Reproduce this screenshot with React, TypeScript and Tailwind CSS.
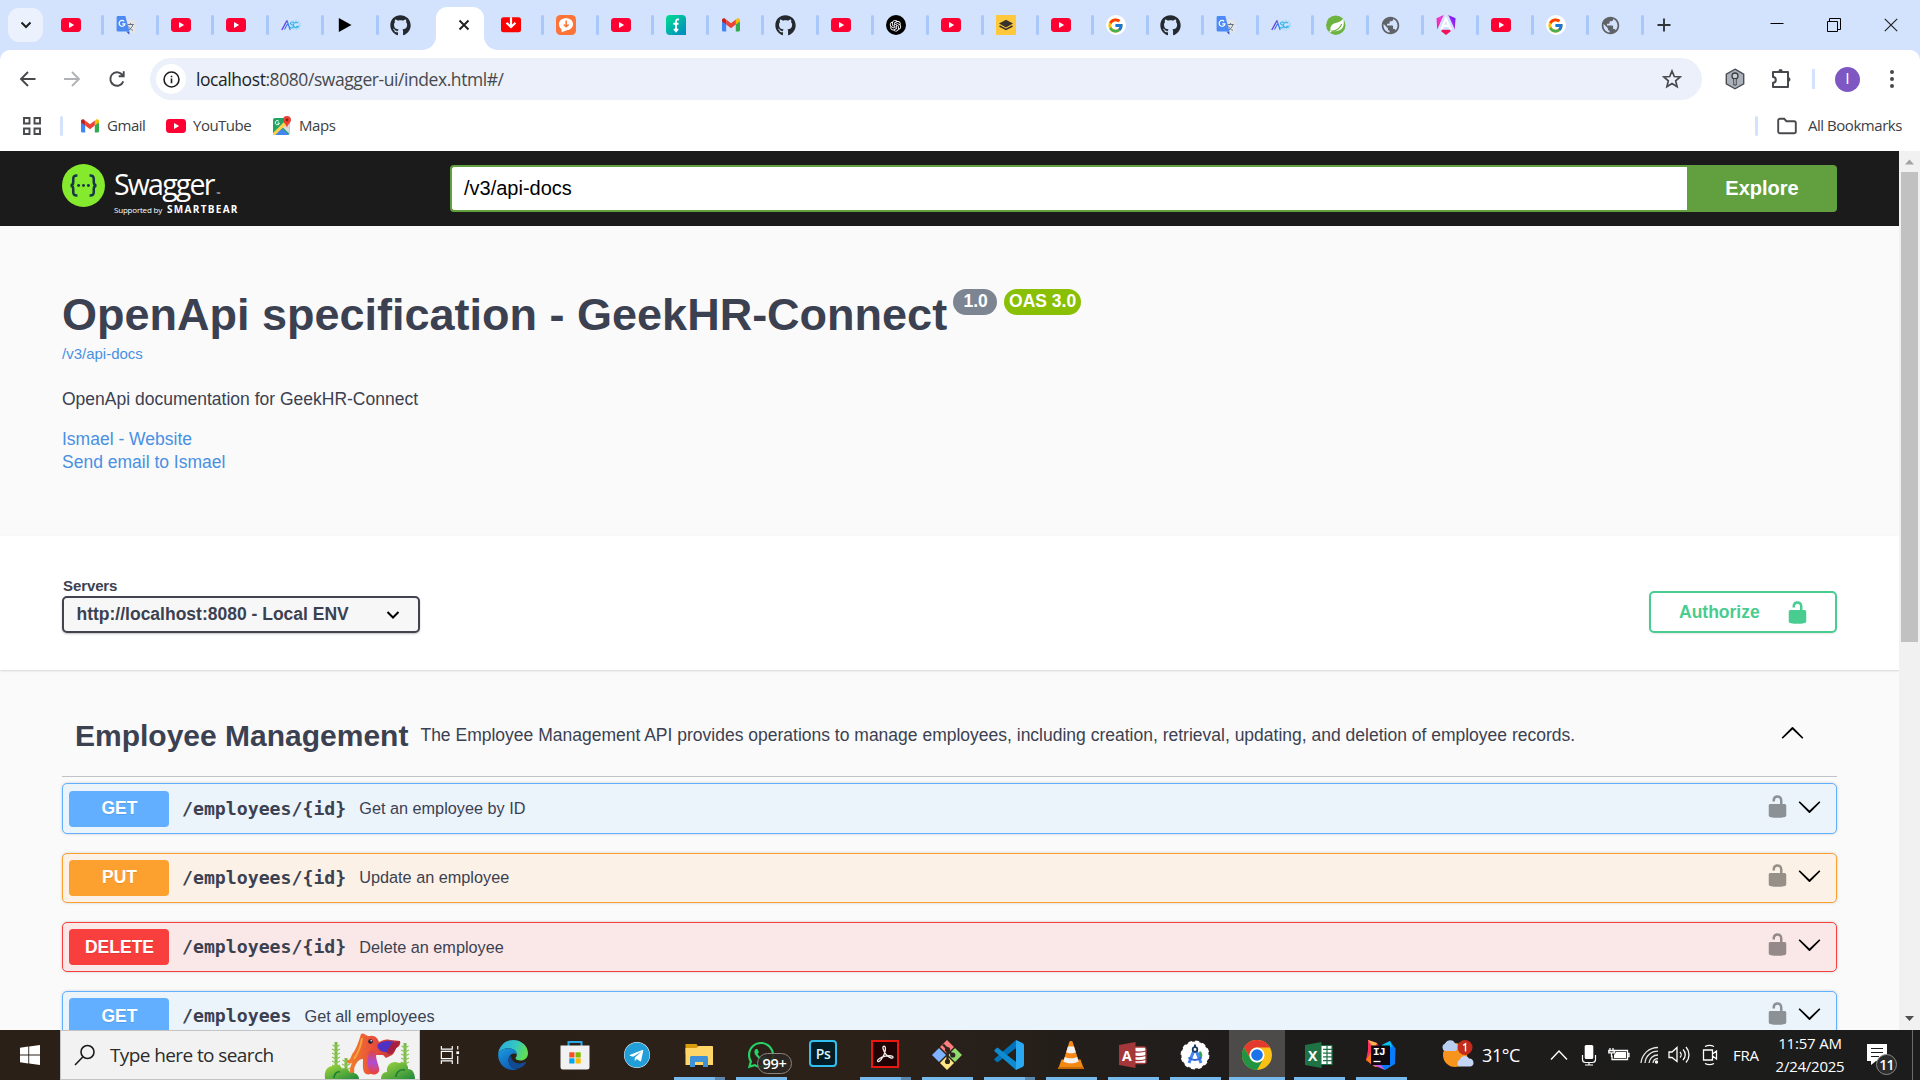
import React, { ReactNode } from 'react';
import { FcGoogle } from 'react-icons/fc';
import { FaGithub, FaTelegram, FaWhatsapp } from 'react-icons/fa';
import { AiOutlineOpenAI } from 'react-icons/ai';
import { MdPublic } from 'react-icons/md';

/* ---------- favicons ---------- */

const YouTube = () => (
  <svg viewBox="0 0 20 20" className="h-5 w-5">
    <rect x="0" y="3" width="20" height="14" rx="3.4" fill="#ff0033" />
    <path d="M8 7v6l5.2-3z" fill="#fff" />
  </svg>
);

const Translate = () => (
  <svg viewBox="0 0 20 20" className="h-5 w-5">
    <path d="M8 5h10a1.4 1.4 0 0 1 1.4 1.4v10.2A1.4 1.4 0 0 1 18 18h-6z" fill="#e3e5e8" />
    <path d="M11.5 9.5h6.3M14.6 8v1.5M16.8 9.7c-.6 2.6-2 4.3-4.3 5.3M12.6 11.5c.9 1.8 2.2 3 4.3 3.9" stroke="#6b7785" strokeWidth="1" fill="none" />
    <path d="M10.3 16.5 13.3 19.8l.1-3.3z" fill="#3a4ec4" />
    <path d="M2 1h7.3l4.2 15.5H2A1.4 1.4 0 0 1 .6 15V2.4A1.4 1.4 0 0 1 2 1z" fill="#4c8bf5" />
    <path d="M8.1 6.3A2.9 2.9 0 1 0 8.9 8.9H6.3" stroke="#fff" strokeWidth="1.2" fill="none" />
  </svg>
);

const Asg = () => (
  <svg viewBox="0 0 20 20" className="h-5 w-5">
    <circle cx="15" cy="10" r="4" fill="none" stroke="#a9d9f7" strokeWidth="2.4" strokeDasharray="1.5 1" />
    <path d="M.8 15 6 5.5" stroke="#6d3fe0" strokeWidth="1.4" fill="none" />
    <path d="m6 5.5 3.2 9.5M3.5 14.5 6.5 9" stroke="#3a7bf0" strokeWidth="1.2" fill="none" />
    <path d="M12.8 7.6c-1.2-1-3.4-.8-3.4.8 0 1.8 3.2 1 3.2 3 0 1.7-2.600 2-3.700.8M17 8.200a2.600 2.600 0 1 0 .3 3.200h-2" stroke="#35b6e8" strokeWidth="1.1" fill="none" />
  </svg>
);

const PlayMark = () => (
  <svg viewBox="0 0 20 20" className="h-5 w-5">
    <path d="M2.8 3v14L15.5 10z" fill="#000" />
  </svg>
);

const GitHub = () => <FaGithub className="h-[21px] w-[21px] text-[#24292f]" />;

const Downloader = () => (
  <svg viewBox="0 0 20 20" className="h-5 w-5">
    <rect y="2.3" width="20" height="15" rx="2.5" fill="#fe0000" />
    <path d="M10 2.3v9.5M5.5 7.8 10 12l4.5-4.2" stroke="#fff" strokeWidth="2.2" fill="none" />
  </svg>
);

const Bubble = () => (
  <svg viewBox="0 0 20 20" className="h-5 w-5">
    <rect width="20" height="20" rx="4.5" fill="#fe7338" />
    <path d="M10 3.2c4.2 0 7 2.3 7 5.8s-2.8 6-6 6.2L5.5 17.2v-3C3.8 13.2 3 11.3 3 9c0-3.5 2.8-5.8 7-5.8z" fill="#fff" />
    <path d="M10.2 5.5v6M7.8 9.5l2.4 2.2 2.4-2.2" stroke="#fe7338" strokeWidth="1.5" fill="none" />
  </svg>
);

const Fiverr = () => (
  <svg viewBox="0 0 20 20" className="h-5 w-5">
    <defs>
      <linearGradient id="fg" x1="0" y1="0" x2="1" y2="1">
        <stop offset="0" stopColor="#00e08e" />
        <stop offset="1" stopColor="#0086c3" />
      </linearGradient>
    </defs>
    <path d="M4 0h12a4 4 0 0 1 4 4v16H4a4 4 0 0 1-4-4V4a4 4 0 0 1 4-4z" fill="url(#fg)" />
    <path d="M13 4.5c-2-.5-3 .5-3 2.5v9M7.3 8.8h5.2M8 14l2 2.3 2-2.3" stroke="#fff" strokeWidth="1.9" fill="none" />
  </svg>
);

const Gmail = () => (
  <svg viewBox="0 0 20 20" className="h-5 w-5">
    <path d="M1 5.5v9.8c0 .7.5 1.2 1.2 1.2h3V9z" fill="#4285f4" />
    <path d="M19 5.5v9.8c0 .7-.5 1.2-1.2 1.2h-3V9z" fill="#34a853" />
    <path d="M14.8 5v4.6L19 6.5V5c0-1.7-1.8-2.4-3-1.4z" fill="#fbbc04" />
    <path d="M1 6.5 5.2 9.6V5L4 3.6C2.8 2.6 1 3.3 1 5z" fill="#c5221f" />
    <path d="M5.2 4.6 10 8.2l4.8-3.6v5L10 13.2 5.2 9.6z" fill="#ea4335" />
  </svg>
);

const OpenAi = () => (
  <span className="flex h-5 w-5 items-center justify-center rounded-full bg-black">
    <AiOutlineOpenAI className="h-[15px] w-[15px] text-white" />
  </span>
);

const Layers = () => (
  <svg viewBox="0 0 20 20" className="h-5 w-5">
    <rect width="20" height="20" fill="#ffc83d" />
    <path d="m10 4.8 7 3.8-7 3.8-7-3.8z" fill="#37322a" />
    <path d="m3.5 11 6.5 3.5 6.5-3.5" stroke="#37322a" strokeWidth="1.5" fill="none" />
  </svg>
);

const Google = () => (
  <span className="flex h-5 w-5 items-center justify-center rounded-full bg-white">
    <FcGoogle className="h-[17px] w-[17px]" />
  </span>
);

const Spring = () => (
  <svg viewBox="0 0 20 20" className="h-5 w-5">
    <circle cx="9.8" cy="10.2" r="9.7" fill="#6db33f" />
    <path d="M17.3 3.2c.9 4.2.8 8.3-1.8 10.8-2.6 2.4-6.5 2.3-10.5 2.3-1.7-3 .2-6.8 3.7-8 3.3-1.2 6.4-1.5 8.6-5.1z" fill="#fff" />
    <path d="M4.5 16.3c5 .1 9-2.3 11.3-7.3" stroke="#6db33f" strokeWidth="1.1" fill="none" />
    <circle cx="4.4" cy="16.4" r="1" fill="#fff" />
    <circle cx="18" cy="3" r="1" fill="#d3e3fd" />
  </svg>
);

const Globe = () => <MdPublic className="h-[21px] w-[21px] text-[#5f6368]" />;

const Angular = () => (
  <svg viewBox="0 0 20 20" className="h-5 w-5">
    <defs>
      <linearGradient id="ang" x1="0" y1="0.8" x2="1" y2="0.3">
        <stop offset="0" stopColor="#f0209b" />
        <stop offset=".4" stopColor="#f53ccd" />
        <stop offset="1" stopColor="#6c1bff" />
      </linearGradient>
    </defs>
    <path d="m12.3 0 7.2 3.2-.7 11.3zM7.7 0 .5 3.2l.7 11.3z" fill="url(#ang)" />
    <path d="m10 1.3 6 13.2h-2.6l-1-2.6H7.6l-1 2.6H4zm0 4.5-1.6 4h3.2z" fill="#fff" />
    <path d="M14.8 16.3 10 20l-4.800-3.700.8-1.600h8z" fill="#f0145b" />
  </svg>
);

const Maps = () => (
  <svg viewBox="0 0 20 20" className="h-5 w-5">
    <rect x="1" y="2" width="16.5" height="17" rx="2" fill="#1fa463" />
    <path d="M9.5 10 17.5 18V7z" fill="#dadce0" />
    <path d="M1 17 14 4l2 3L3.5 19H2.5A1.5 1.5 0 0 1 1 17.5z" fill="#ffd04b" />
    <path d="m10 12.5 7 6.5H3.5z" fill="#4285f4" />
    <path d="M6.8 5.2A2.1 2.1 0 1 0 7.4 7H5.5" stroke="#fff" strokeWidth="1" fill="none" />
    <path d="M15 0a4 4 0 0 0-4 4c0 3 3.3 3.8 4 8 .7-4.2 4-5 4-8a4 4 0 0 0-4-4z" fill="#ea4335" />
    <circle cx="15" cy="4" r="1.4" fill="#8e1b12" />
  </svg>
);

/* ---------- browser ---------- */

const leftTabs = [YouTube, Translate, YouTube, YouTube, Asg, PlayMark, GitHub];
const rightTabs = [
  Downloader, Bubble, YouTube, Fiverr, Gmail, GitHub, YouTube, OpenAi, YouTube, Layers, YouTube,
  Google, GitHub, Translate, Asg, Spring, Globe, Angular, YouTube, Google, Globe,
];

function Tab({ children, divider = true }: { children: ReactNode; divider?: boolean }) {
  return (
    <div className="flex h-[50px] w-[55px] shrink-0 items-center">
      <div className="ml-[10px] flex h-[21px] w-[21px] items-center justify-center">{children}</div>
      {divider && <div className="mr-px ml-auto h-5 w-[3px] rounded-full bg-[#a8c7fa]" />}
    </div>
  );
}

function TabStrip() {
  return (
    <div className="flex h-[50px] bg-[#d3e3fd]">
      <div className="mt-2 ml-2 flex h-[34px] w-[35px] shrink-0 items-center justify-center rounded-[11px] bg-[#ebf1fd]">
        <svg viewBox="0 0 12 12" className="h-3 w-3">
          <path d="m1.5 3.5 4.5 4.5 4.5-4.5" stroke="#1f1f1f" strokeWidth="2" fill="none" />
        </svg>
      </div>
      <div className="ml-[7px] flex">
        {leftTabs.map((Icon, i) => (
          <Tab key={i} divider={i < 6}>
            <Icon />
          </Tab>
        ))}
      </div>
      <div className="-ml-[14px] flex h-[50px] w-[78px] shrink-0 items-end">
        <svg viewBox="0 0 78 43" className="h-[43px] w-[78px]">
          <path d="M0 43c9 0 15-6 15-14V11C15 5 20 0 26 0h26c6 0 11 5 11 11v18c0 8 6 14 15 14z" fill="#fff" />
          <path d="m38.5 13.5 9 9m0-9-9 9" stroke="#1f1f1f" strokeWidth="1.9" />
        </svg>
      </div>
      <div className="-ml-[9px] flex">
        {rightTabs.map((Icon, i) => (
          <Tab key={i}>
            <Icon />
          </Tab>
        ))}
      </div>
      <div className="ml-[12px] flex h-[50px] items-center">
        <svg viewBox="0 0 14 14" className="h-[14px] w-[14px]">
          <path d="M7 .5v13M.5 7h13" stroke="#30353c" strokeWidth="1.9" />
        </svg>
      </div>
      <div className="mr-[22px] ml-auto flex h-[50px] items-center gap-[43px]">
        <svg viewBox="0 0 14 14" className="h-[14px] w-[14px]">
          <path d="M.5 5.5h13" stroke="#000" strokeWidth="1" />
        </svg>
        <svg viewBox="0 0 14 14" className="h-[14px] w-[14px]" fill="none" stroke="#000" strokeWidth="1">
          <path d="M.5 3.5h10v10H.5zM2.500 3.500V.5h11v11h-3" />
        </svg>
        <svg viewBox="0 0 14 14" className="h-[14px] w-[14px]">
          <path d="m.8.8 12.400 12.400m0-12.400L.8 13.200" stroke="#222" strokeWidth="1.2" />
        </svg>
      </div>
    </div>
  );
}

function Toolbar() {
  return (
    <div className="bg-[#d3e3fd]">
      <div className="flex h-[58px] items-center rounded-t-[10px] bg-white pl-[18px]">
        <svg viewBox="0 0 20 20" className="h-5 w-5" fill="none" stroke="#47494d" strokeWidth="1.9">
          <path d="M17.5 10H3.5M10 3l-7 7 7 7" />
        </svg>
        <svg viewBox="0 0 20 20" className="ml-6 h-5 w-5" fill="none" stroke="#b0b2b5" strokeWidth="1.9">
          <path d="M2 10h14M10 3l7 7-7 7" />
        </svg>
        <svg viewBox="0 0 20 20" className="ml-[25px] h-5 w-5" fill="none" stroke="#47494d" strokeWidth="1.9">
          <path d="M16.3 12.3A6.7 6.7 0 1 1 15 5.5l1.3 1.3M16.7 2.3v5h-5" />
        </svg>
        <div className="ml-[23px] flex h-[42px] w-[1552px] items-center rounded-full bg-[#ebf0fa] pr-[20px] pl-[6px]">
          <div className="flex h-[30px] w-[30px] items-center justify-center rounded-full bg-white">
            <svg viewBox="0 0 18 18" className="h-[17px] w-[17px]" fill="none" stroke="#1f1f1f" strokeWidth="1.7">
              <circle cx="9" cy="9" r="7.9" />
              <path d="M9 8v5M9 5v1.6" />
            </svg>
          </div>
          <div className="ml-[10px] font-['Open_Sans'] text-[17.5px] tracking-[-0.43px] whitespace-nowrap text-[#47494d]">
            <span className="text-[#1f1f1f]">localhost</span>:8080/swagger-ui/index.html#/
          </div>
          <svg viewBox="0 0 20 20" className="ml-auto h-5 w-5" fill="none" stroke="#47494d" strokeWidth="1.7">
            <path d="m10 2 2.3 5.5 5.9.5-4.5 3.9 1.4 5.8-5.1-3.1-5.1 3.1 1.4-5.8L1.8 8l5.9-.5z" />
          </svg>
        </div>
        <svg viewBox="0 0 22 22" className="ml-[22px] h-[22px] w-[22px]">
          <path d="m11 1.2 8.7 4.9v9.8L11 20.8l-8.7-4.9V6.1z" fill="#aab1ba" stroke="#4a4d52" strokeWidth="1.4" />
          <circle cx="11" cy="8" r="3" fill="#c9cdd3" stroke="#3a3d42" strokeWidth="1.3" />
          <path d="M9.8 10.500h2.400V17H9.800z" fill="#c9cdd3" stroke="#3a3d42" strokeWidth="1" />
        </svg>
        <svg viewBox="0 0 22 22" className="ml-[24px] h-[22px] w-[22px]" fill="none" stroke="#47494d" strokeWidth="2">
          <path d="M3 4h15v15H3v-4.3a2.8 2.8 0 0 0 0-5.6z" strokeLinejoin="round" />
          <path d="M8.3 3.5a2.2 2.4 0 0 1 4.4 0zM18.5 9.2a2 2.2 0 0 1 0 4.4z" fill="#47494d" stroke="none" />
        </svg>
        <div className="ml-[20px] h-5 w-[3px] bg-[#d3e3fd]" />
        <div className="ml-[20px] flex h-[25px] w-[25px] items-center justify-center rounded-full bg-[#7e57c2] font-['Roboto'] text-[14px] text-white">
          I
        </div>
        <svg viewBox="0 0 6 20" className="ml-[29px] h-5 w-[6px]" fill="#47494d">
          <circle cx="3" cy="3" r="2" />
          <circle cx="3" cy="10" r="2" />
          <circle cx="3" cy="17" r="2" />
        </svg>
      </div>
      <div className="flex h-[43px] items-start bg-white pt-[7px] font-['Open_Sans'] text-[15px] tracking-[-0.45px] text-[#3c4043]">
        <div className="flex h-[21px] w-full items-center">
          <svg viewBox="0 0 18 18" className="ml-[23px] h-[18px] w-[18px]" fill="none" stroke="#47494d" strokeWidth="1.9">
            <path d="M1 1h5.5v5.5H1zM11.5 1H17v5.5h-5.5zM1 11.5h5.5V17H1zM11.5 11.5H17V17h-5.5z" />
          </svg>
          <div className="ml-[19px] h-5 w-[3px] rounded-full bg-[#d3e3fd]" />
          <div className="ml-[17px] flex w-[86px] items-center gap-[7px]">
            <Gmail />
            Gmail
          </div>
          <div className="flex w-[106px] items-center gap-[7px]">
            <YouTube />
            <span className="tracking-[-0.5px]">YouTube</span>
          </div>
          <div className="flex items-center gap-[7px]">
            <Maps />
            Maps
          </div>
          <div className="ml-auto h-5 w-[3px] rounded-full bg-[#d3e3fd]" />
          <svg viewBox="0 0 20 18" className="ml-[19px] h-[18px] w-5" fill="none" stroke="#47494d" strokeWidth="1.9">
            <path d="M1.2 14.5v-11C1.2 2.5 2 1.8 3 1.8h4.2l2.2 2.4H17c1 0 1.8.8 1.8 1.8v8.5c0 1-.8 1.8-1.8 1.8H3c-1 0-1.8-.8-1.8-1.8z" />
          </svg>
          <span className="mr-[18px] ml-[11px] tracking-[-0.45px]">All Bookmarks</span>
        </div>
      </div>
    </div>
  );
}

/* ---------- API page ---------- */

function SwaggerLogo() {
  return (
    <div className="flex w-[388px] shrink-0">
      <svg viewBox="0 0 44 44" className="h-[43px] w-[43px]">
        <circle cx="22" cy="22" r="22" fill="#85ea2d" />
        <path
          d="M15.8 11.8c-3.2-.2-4.3.9-4.3 3.6v3c0 2.2-.8 3.4-2.7 3.6 1.9.2 2.7 1.4 2.7 3.6v3c0 2.7 1.1 3.8 4.3 3.6M28.2 11.8c3.2-.2 4.3.9 4.3 3.6v3c0 2.2.8 3.4 2.7 3.6-1.9.2-2.7 1.4-2.7 3.6v3c0 2.7-1.1 3.8-4.3 3.6"
          stroke="#173647"
          strokeWidth="2.6"
          fill="none"
        />
        <circle cx="17" cy="22" r="1.5" fill="#173647" />
        <circle cx="22" cy="22" r="1.5" fill="#173647" />
        <circle cx="27" cy="22" r="1.5" fill="#173647" />
      </svg>
      <div className="ml-[9px] pt-px font-['Open_Sans'] text-white">
        <div className="flex h-[38px] items-end">
          <span className="text-[28.5px] leading-[38px] tracking-[-1.8px]">Swagger</span>
          <span className="mb-[6px] ml-[3px] text-[5px] leading-none">™</span>
        </div>
        <div className="flex items-baseline leading-[12px]">
          <span className="w-[53px] text-[8px] tracking-[-0.2px]">Supported by</span>
          <span className="text-[10px] font-bold tracking-[1.3px]">SMARTBEAR</span>
        </div>
      </div>
    </div>
  );
}

const LockIcon = () => (
  <svg viewBox="0 0 20 20" className="h-[25px] w-[25px]" fill="currentColor">
    <path d="M15.8 8H14V5.6C14 2.703 12.665 1 10 1 7.334 1 6 2.703 6 5.6V6h2v-.801C8 3.754 8.797 3 10 3c1.203 0 2 .754 2 2.199V8H4c-.553 0-1 .646-1 1.199V17c0 .549.428 1.139.951 1.307l1.197.387C5.672 18.861 6.55 19 7.1 19h5.8c.549 0 1.428-.139 1.951-.307l1.196-.387c.524-.167.953-.757.953-1.306V9.199C17 8.646 16.352 8 15.8 8z" />
  </svg>
);

const Chevron = ({ up = false }: { up?: boolean }) => (
  <svg viewBox="0 0 20 20" className={up ? 'h-[25px] w-[25px] rotate-180' : 'h-[25px] w-[25px]'}>
    <path d="M17.418 6.109c.272-.268.709-.268.979 0s.271.701 0 .969l-7.908 7.83a.697.697 0 0 1-.979 0l-7.908-7.83c-.271-.268-.271-.701 0-.969s.709-.268.979 0L10 13.25z" />
  </svg>
);

const operations = [
  { method: 'GET', path: '/employees/{id}', text: 'Get an employee by ID', box: 'h-[51px] pt-[7px] border-[#61affe] bg-[#ebf3fb]', badge: 'bg-[#61affe] leading-[34px]', note: 'leading-[34px]' },
  { method: 'PUT', path: '/employees/{id}', text: 'Update an employee', box: 'h-[50px] pt-[6px] border-[#fca130] bg-[#fbf1e6]', badge: 'bg-[#fca130] leading-[34px]', note: 'leading-[34px]' },
  { method: 'DELETE', path: '/employees/{id}', text: 'Delete an employee', box: 'h-[50px] pt-[6px] border-[#f93e3e] bg-[#fae7e7]', badge: 'bg-[#f93e3e] leading-[36px]', note: 'leading-[36px]' },
  { method: 'GET', path: '/employees', text: 'Get all employees', box: 'h-[50px] pt-[6px] border-[#61affe] bg-[#ebf3fb]', badge: 'bg-[#61affe] leading-[36px]', note: 'leading-[36px]' },
];

function SwaggerPage() {
  return (
    <div className="h-[879px] w-[1899px] overflow-hidden bg-[#fafafa] font-['Liberation_Sans'] text-[17.5px] text-[#3b4151]">
      <header className="flex h-[75px] items-start bg-[#1b1b1b] pt-[13px] pl-[62px]">
        <SwaggerLogo />
        <div className="mt-px flex h-[47px] w-[1237px] items-center rounded-l-[4px] border-2 border-r-0 border-[#62a03f] bg-white pb-[2px] pl-[12px] text-[20px] text-black">
          /v3/api-docs
        </div>
        <div className="mt-px flex h-[47px] w-[150px] items-center justify-center rounded-r-[4px] bg-[#62a03f] pb-[2px] text-[20px] font-bold text-white">
          Explore
        </div>
      </header>

      <section className="h-[310px] pt-[61px] pl-[62px]">
        <div className="flex items-start">
          <h2 className="pt-px text-[45px] leading-[54px] font-bold whitespace-nowrap">OpenApi specification - GeekHR-Connect</h2>
          <div className="mt-[2px] ml-[6px] flex h-[26px] w-[44px] justify-center rounded-full bg-[#7d8492] pl-px leading-[24px] font-bold text-white">1.0</div>
          <div className="mt-[2px] ml-[7px] flex h-[26px] w-[77px] justify-center rounded-full bg-[#89bf04] leading-[24px] font-bold text-white">OAS 3.0</div>
        </div>
        <div className="mt-[2px] text-[15px] leading-5 text-[#4990e2]">/v3/api-docs</div>
        <p className="mt-[23px] leading-6">OpenApi documentation for GeekHR-Connect</p>
        <div className="mt-[17px] leading-[23px] text-[#4990e2]">
          <div>Ismael - Website</div>
          <div>Send email to Ismael</div>
        </div>
      </section>

      <section className="flex h-[134px] items-start justify-between bg-white pr-[62px] pl-[62px] shadow-[0_1px_2px_0_rgba(0,0,0,0.15)]">
        <div className="pt-[41px] font-bold">
          <div className="pl-px text-[15px] leading-[18px] tracking-[-0.1px]">Servers</div>
          <div className="mt-px flex h-[37px] w-[358px] items-center justify-between rounded-[5px] border-2 border-[#41444e] bg-[#f7f7f7] pr-[18px] pl-[12.5px] shadow-[0_1px_2px_0_rgba(0,0,0,0.25)]">
            http://localhost:8080 - Local ENV
            <svg viewBox="0 0 14 10" className="h-[10px] w-[14px]">
              <path d="m1.5 2 5.5 5.5L12.5 2" stroke="#000" strokeWidth="2" fill="none" />
            </svg>
          </div>
        </div>
        <div className="mt-[55px] flex h-[42px] w-[188px] items-center rounded-[5px] border-2 border-[#49cc90] pl-[28px] font-bold text-[#49cc90] shadow-[0_1px_2px_rgba(0,0,0,0.1)]">
          <span className="w-[106px]">Authorize</span>
          <LockIcon />
        </div>
      </section>

      <section className="px-[62px] pt-[26px]">
        <div className="flex h-[81px] items-center border-b border-[#3b4151]/30 pr-[32px] pb-[2px] pl-[13px]">
          <h3 className="text-[30px] font-bold">Employee Management</h3>
          <p className="ml-[12px] whitespace-nowrap">
            The Employee Management API provides operations to manage employees, including creation, retrieval, updating, and deletion of employee records.
          </p>
          <div className="-mt-[4px] ml-auto">
            <Chevron up />
          </div>
        </div>
        <div className="mt-[6px] flex flex-col gap-[19px]">
          {operations.map((op, i) => (
            <div key={i} className={`flex shrink-0 items-start rounded-[5px] border pr-[14px] pl-[6px] shadow-[0_0_3px_rgba(0,0,0,0.19)] ${op.box}`}>
              <div className={`h-9 w-[100px] rounded-[4px] pl-px text-center font-bold text-white [text-shadow:0_1px_0_rgba(0,0,0,0.1)] ${op.badge}`}>
                {op.method}
              </div>
              <div className="ml-[13px] font-['DejaVu_Sans_Mono'] text-[18.2px] leading-9 font-bold">{op.path}</div>
              <div className={`ml-[13px] text-[16.25px] ${op.note}`}>{op.text}</div>
              <div className="mt-[3px] ml-auto flex gap-[7px] text-black">
                <span className="opacity-40">
                  <LockIcon />
                </span>
                <Chevron />
              </div>
            </div>
          ))}
        </div>
      </section>
    </div>
  );
}

function Scrollbar() {
  return (
    <div className="flex h-[879px] w-[21px] flex-col items-center bg-[#f1f1f1]">
      <svg viewBox="0 0 21 21" className="h-[21px] w-[21px]">
        <path d="m6 13.5 4.5-5 4.5 5z" fill="#a3a3a3" />
      </svg>
      <div className="h-[470px] w-[17px] bg-[#c1c1c1]" />
      <svg viewBox="0 0 21 21" className="mt-auto h-[21px] w-[21px]">
        <path d="m6 7 4.5 5L15 7z" fill="#505050" />
      </svg>
    </div>
  );
}

/* ---------- taskbar ---------- */

const Edge = () => (
  <svg viewBox="0 0 30 30" className="h-[30px] w-[30px]">
    <defs>
      <linearGradient id="e1" x1="0" y1="0" x2="1" y2=".3">
        <stop offset="0" stopColor="#2aa7e0" />
        <stop offset=".6" stopColor="#34c6c4" />
        <stop offset="1" stopColor="#5fdd5a" />
      </linearGradient>
      <linearGradient id="e2" x1="0" y1="0" x2=".6" y2="1">
        <stop offset="0" stopColor="#1b9de2" />
        <stop offset="1" stopColor="#0f5cb3" />
      </linearGradient>
    </defs>
    <path d="M.3 13C1.5 5.5 7.5 0 15 0c9 0 15 6.5 15 13.2 0 4.3-3.3 7.3-7.3 7.3-3.5 0-5.2-1.2-5.2-2.3 0-.8 1.3-1.2 1.3-3.5C18.8 11 15 8.2 10.5 8.2 5.5 8.2 2 10.5.3 13z" fill="url(#e1)" />
    <path d="M.3 13C2 10.5 5.5 8.2 10.5 8.2c4.5 0 8.3 2.8 8.3 6-3.5-2-8.3.6-8.3 5.8 0 5 4 9.5 9 9C17.5 30 15 30 14 30 6 29.5-.8 22 .3 13z" fill="url(#e2)" />
    <path d="M11 17.5c-2.5 6 3 12.5 9 11.3 3.5-.8 6.5-3.3 8-6 .4-.7-.3-1-.8-.7-6 3-13.7 1.4-14.2-6z" fill="#124a94" />
  </svg>
);

const Store = () => (
  <svg viewBox="0 0 30 30" className="h-[30px] w-[30px]">
    <path d="M8.5 6V2h13v4" stroke="#2ba8e8" strokeWidth="2" fill="none" />
    <path d="M.5 5.5h29V27a2.5 2.5 0 0 1-2.5 2.5H3A2.5 2.5 0 0 1 .5 27z" fill="#f1f1f1" />
    <path d="M9.3 12.3h5.2v5.2H9.3z" fill="#f25022" />
    <path d="M15.5 12.3h5.2v5.2h-5.2z" fill="#7fba00" />
    <path d="M9.3 18.3h5.2v5.2H9.3z" fill="#00a4ef" />
    <path d="M15.5 18.3h5.2v5.2h-5.2z" fill="#ffb900" />
  </svg>
);

const Telegram = () => (
  <span className="flex h-[26px] w-[26px] rounded-full bg-white">
    <FaTelegram className="h-[26px] w-[26px] text-[#229ed9]" />
  </span>
);

const Explorer = () => (
  <svg viewBox="0 0 30 26" className="h-[26px] w-[30px]">
    <path d="M1.5 2h11l2 3v7h-13z" fill="#d99a0b" />
    <path d="M1.5 6h11l2-2H28c.6 0 1 .4 1 1v18H1.5z" fill="#ffd667" />
    <path d="M6 25v-9.5C6 14.7 6.7 14 7.5 14h15c.8 0 1.5.7 1.5 1.5V25h-5v-5h-8v5z" fill="#3f92d8" />
  </svg>
);

const WhatsApp = () => (
  <span className="relative flex h-[30px] w-[30px]">
    <FaWhatsapp className="h-[30px] w-[30px] text-[#25d366]" />
    <span className="absolute top-[13px] left-[11px] flex h-[21px] w-[35px] items-center justify-center rounded-full border border-[#8a8580] bg-[#2b2723]/90 font-['Open_Sans'] text-[14.5px] font-semibold tracking-[-0.3px] text-white">
      99+
    </span>
  </span>
);

const Photoshop = () => (
  <span className="mb-[3px] flex h-[27px] w-[28px] items-center justify-center rounded-[4px] border-2 border-[#2fc0f0] bg-[#021d26] font-['Open_Sans'] text-[14px] font-semibold tracking-[-0.5px] text-[#d9f3fc]">
    Ps
  </span>
);

const Acrobat = () => (
  <svg viewBox="0 0 28 28" className="mb-[3px] h-[28px] w-[28px]">
    <rect x="1" y="1" width="26" height="26" fill="#200405" stroke="#e8170f" strokeWidth="2" />
    <path d="M12.5 6.3c2.5-.8 2.4 4.2.7 8-1.6 3.7-4.7 8.2-6.3 7.2-1.8-1.3 2.6-4.3 7.3-5.3 4.8-1 8.2-.3 7.8 1.3-.5 1.7-4.6-.2-7-3.2-2.3-2.8-4-7.4-2.5-8z" stroke="#f0eeee" strokeWidth="1.3" fill="none" />
  </svg>
);

const GitBash = () => (
  <svg viewBox="0 0 30 30" className="h-[30px] w-[30px]">
    <path d="m15 0 7 7-7 7-7-7z" fill="#ff7f7f" />
    <path d="m23 8 7 7-7 7-7-7z" fill="#8fdc6c" />
    <path d="m7 8 7 7-7 7-7-7z" fill="#80b3ff" />
    <path d="m15 16 7 7-7 7-7-7z" fill="#ffe680" />
    <path d="M11 4.5 15.5 9v12M15.5 10l5 5" stroke="#2d2520" strokeWidth="2.4" fill="none" />
    <circle cx="15.5" cy="9.5" r="2.6" fill="#2d2520" />
    <circle cx="15.5" cy="21.5" r="2.6" fill="#2d2520" />
    <circle cx="20.8" cy="15" r="2.6" fill="#2d2520" />
  </svg>
);

const VsCode = () => (
  <svg viewBox="0 0 30 30" className="h-[30px] w-[30px]">
    <path d="M22 0 .8 18.5c-.6.5-.6 1.3 0 1.8l1.6 1.5c.5.4 1.2.5 1.7.1L24 6.5z" fill="#0073b8" />
    <path d="M22 30 .8 11.5c-.6-.5-.6-1.3 0-1.8l1.6-1.5c.5-.4 1.2-.5 1.7-.1L24 23.5z" fill="#0f8bd0" />
    <path d="M22 0l6.5 3.1c.9.4 1.5 1.3 1.5 2.3v19.2c0 1-.6 1.9-1.5 2.3L22 30z" fill="#2aa8f2" />
  </svg>
);

const Vlc = () => (
  <svg viewBox="0 0 28 30" className="h-[30px] w-[28px]">
    <path d="M4.5 19.5h19L26.8 29H1.2z" fill="#f08a12" />
    <path d="M12.3 2c.4-1.3 3-1.3 3.4 0l6.5 21c-2 2.8-14.4 2.8-16.4 0z" fill="#f6881a" />
    <path d="M11 6.5h6l1.8 5.8c-2.2 1.4-7.4 1.4-9.6 0zM7.8 17c2.8 1.8 9.6 1.8 12.4 0l1.4 4.5c-3.5 2.4-11.7 2.4-15.2 0z" fill="#f2f2f2" />
    <path d="M1.2 27h25.6v2H1.2z" fill="#c96a05" />
  </svg>
);

function Office({ color, letter, rows }: { color: string; letter: string; rows: ReactNode }) {
  return (
    <span className="relative flex h-[26px] w-[28px] items-center">
      <svg viewBox="0 0 28 26" className="h-[26px] w-[28px]">
        {rows}
        <path d="M0 3 16.5 0v26L0 23z" fill={color} />
      </svg>
      <span className="absolute left-[3px] font-['Open_Sans'] text-[14px] font-bold text-white">{letter}</span>
    </span>
  );
}

const Access = () => (
  <Office
    color="#a4373a"
    letter="A"
    rows={
      <g fill="#fff" stroke="#a4373a" strokeWidth="1.3">
        <path d="M14 5h10.5a2 2 0 0 1 2.5 2v12a2 2 0 0 1-2.5 2.5H14z" />
        <path d="M14 9.5c6 1 10 .5 13-.5M14 14c6 1 10 .5 13-.5M14 18c6 1 10 .5 13-.5" fill="none" />
      </g>
    }
  />
);

const Excel = () => (
  <Office
    color="#1f7244"
    letter="X"
    rows={
      <g fill="#fff" stroke="#1f7244" strokeWidth="1.2">
        <path d="M14 3.5h13v19H14z" />
        <path d="M22 3.5v19M18 7.3h9M18 11.1h9M18 14.9h9M18 18.7h9" />
      </g>
    }
  />
);

const Studio = () => (
  <svg viewBox="0 0 30 30" className="h-[30px] w-[30px]">
    <circle cx="15" cy="15" r="13.6" fill="#fff" />
    <circle cx="15" cy="15" r="13.6" fill="none" stroke="#fff" strokeWidth="1.6" strokeDasharray="4 3.100" />
    <path d="M20 11c3 2 3 6 .5 8L18 14z" fill="#34a853" />
    <path d="M14.5 9 9 23M15.5 9 21 23" stroke="#4285f4" strokeWidth="3" />
    <path d="M8.5 17.5c4 3 9 3 13 0" stroke="#3367d6" strokeWidth="2" fill="none" />
    <path d="M15 4.5v3" stroke="#1c3a5f" strokeWidth="2" />
    <circle cx="15" cy="9.5" r="2.3" fill="#fff" stroke="#1c3a5f" strokeWidth="1.8" />
  </svg>
);

const Chrome = () => (
  <svg viewBox="0 0 30 30" className="h-[30px] w-[30px]">
    <circle cx="15" cy="15" r="15" fill="#fbc116" />
    <path d="M2 7.5A15 15 0 0 1 28 7.5H15A7.5 7.5 0 0 0 8.5 18.8z" fill="#e33b2e" />
    <path d="M2 7.5A15 15 0 0 0 15 30l6.5-11.3A7.5 7.5 0 0 1 8.5 18.7z" fill="#229342" />
    <circle cx="15" cy="15" r="7.5" fill="#fff" />
    <circle cx="15" cy="15" r="5.8" fill="#1a73e8" />
  </svg>
);

const IntelliJ = () => (
  <span className="relative flex h-[30px] w-[30px]">
    <svg viewBox="0 0 30 30" className="h-[30px] w-[30px]">
      <path d="M2 0 11 3l6 10L5 24 0 20 2 10z" fill="#fe315d" />
      <path d="M2 0 11 3 8 9z" fill="#f9b44e" />
      <path d="m0 20 6-9 6 16-3 0z" fill="#f97a12" />
      <path d="M16 5 24 1l5.5 7.5L29 24l-10 6-9-6z" fill="#087cfa" />
      <path d="m16 5 8-4 2 5-9 8z" fill="#07c3f2" />
      <path d="m4 24 8 3 7 3-8-10z" fill="#c757e8" />
      <path d="M5 5.5h19V25H5z" fill="#100810" />
      <path d="M7.5 21.5h7" stroke="#fff" strokeWidth="1.3" />
    </svg>
    <span className="absolute top-[6px] left-[7px] font-['Liberation_Mono'] text-[11px] leading-[12px] font-bold tracking-[-0.5px] text-white">IJ</span>
  </span>
);

const full = <div className="h-[3px] w-[51px] bg-[#76b9ed]" />;
const split = (
  <div className="flex">
    <div className="h-[3px] w-[41px] bg-[#76b9ed]" />
    <div className="h-[3px] w-[10px] bg-[#5a87ab]" />
  </div>
);

const apps: { Icon: () => ReactNode; bar?: ReactNode; active?: boolean }[] = [
  { Icon: Edge },
  { Icon: Store },
  { Icon: Telegram },
  { Icon: Explorer, bar: split },
  { Icon: WhatsApp, bar: full },
  { Icon: Photoshop },
  { Icon: Acrobat, bar: split },
  { Icon: GitBash, bar: full },
  { Icon: VsCode, bar: split },
  { Icon: Vlc, bar: full },
  { Icon: Access, bar: full },
  { Icon: Studio, bar: full },
  { Icon: Chrome, bar: <div className="h-[3px] w-full bg-[#76b9ed]" />, active: true },
  { Icon: Excel, bar: full },
  { Icon: IntelliJ, bar: full },
];

const Reef = () => (
  <svg viewBox="0 0 92 48" className="h-[48px] w-[92px]">
    <defs>
      <linearGradient id="oct" x1="0" y1="0" x2="1" y2="0">
        <stop offset="0" stopColor="#f0812b" />
        <stop offset=".5" stopColor="#ea4f3a" />
        <stop offset="1" stopColor="#b02a3a" />
      </linearGradient>
      <linearGradient id="arm" x1="0" y1="0" x2="0" y2="1">
        <stop offset="0" stopColor="#e2453c" />
        <stop offset=".5" stopColor="#b04bd8" />
        <stop offset="1" stopColor="#f0432c" />
      </linearGradient>
      <linearGradient id="bush" x1="0" y1="0" x2="1" y2="1">
        <stop offset="0" stopColor="#a5d83c" />
        <stop offset="1" stopColor="#1f8a3c" />
      </linearGradient>
    </defs>
    <path d="M12 11v30M22 27v15M81 12v30" stroke="#7cb84a" strokeWidth="3" />
    <path d="m8.500 14 3.500 2 3.500-2M8 18l4 2 4-2M8 22l4 2 4-2M8 26l4 2 4-2M8 30l4 2 4-2M8 34l4 2 4-2M18.500 29l3.500 2 3.500-2M18 33l4 2 4-2M18 37l4 2 4-2M77.500 15l3.500 2 3.500-2M77 19l4 2 4-2M77 23l4 2 4-2M77 27l4 2 4-2M77 31l4 2 4-2" stroke="#8cc653" strokeWidth="1.300" fill="none" />
    <path d="M37 3c3-2 4 2 9 2 5-1 8 3 9 6 4-2 7-3 11-2l10 1c1 3-1 6-4 7-1 4-3 7-6 8l-4 2-3-3-6 0c-5 0-6 4-4 10 3 6-2 11-7 9-4-2-3-10-3-15-4 0-6 3-8 7-2 3 1 8-3 8s-2-7 0-11c-4 2-6-1-5-3 4 1 4-5 6-7 3-4 5-9 8-19z" fill="url(#oct)" />
    <path d="M38 7c-1 8-4 15-8 21" stroke="#f9a23c" strokeWidth="2" fill="none" />
    <path d="M45 21c2-3 7-2 7 2 0 6 2 9 3 14 2 6-7 9-9 4-3-4-3-14-1-20z" fill="url(#arm)" />
    <path d="M54 13c4-3 11-4 16-2-1 6-4 11-10 10-4-1-8-4-6-8z" fill="#4f32c4" />
    <path d="m63 20 5-8 6-1c1 4-3 8-6 11-2 2-6 1-5-2z" fill="#a3213f" />
    <circle cx="46.500" cy="10.500" r="2.300" fill="#1a2340" />
    <circle cx="47.200" cy="9.800" r=".8" fill="#fff" />
    <path d="M1 48c-1-8 2-13 8-13 3-3 8-1 9 3 5-2 8 2 8 4 5-1 9 2 9 6z" fill="url(#bush)" />
    <path d="M57 48c0-4 2-7 6-7-1-8 6-12 12-9 5-2 10 2 9 6 5 0 7 5 7 10z" fill="url(#bush)" />
    <path d="M10 47c0-4 3-7 6-6M72 46c0-5 4-8 9-7" stroke="#1c7a33" strokeWidth="1.500" fill="none" />
  </svg>
);

const trayIcon = 'h-6 w-6 shrink-0';

function Tray() {
  return (
    <div className="flex items-center font-['Open_Sans'] text-white">
      <svg viewBox="0 0 32 30" className="ml-[30px] h-[30px] w-[32px]">
        <circle cx="13" cy="15" r="12" fill="#f7941e" />
        <path d="M3 11a4 4 0 0 1 0-7.5C5-1 12-1 13 3.5c3 .5 4 4 2 6-.5 1-2 1.500-3 1.500z" fill="#b9cdf2" />
        <path d="M17 26.500a4 4 0 0 1 1-7c1-4 7-5 9-1 3 0 4.500 2 4.500 4.500 0 2-1.500 3.500-3.500 3.500z" fill="#c5d6f5" />
        <circle cx="23" cy="7.500" r="7.500" fill="#c42b1c" />
        <path d="m21.200 5.300 2.300-1.500V11.500" stroke="#fff" strokeWidth="1.400" fill="none" />
      </svg>
      <span className="ml-[8px] w-[68px] text-[18px] tracking-[-0.4px]">31°C</span>
      <svg viewBox="0 0 18 12" className="h-3 w-[18px]" fill="none" stroke="#fff" strokeWidth="1.4">
        <path d="M1 10.5 9 2l8 8.500" />
      </svg>
      <svg viewBox="0 0 16 24" className="ml-[13px] h-6 w-4">
        <rect x="3.7" y="2" width="8.6" height="14" rx="1.500" fill="#fff" />
        <path d="M1.500 12v4.500c0 2 1 3 3 3h7c2 0 3-1 3-3V12M8 19.500V22M4 22h8" stroke="#fff" strokeWidth="1.200" fill="none" />
      </svg>
      <svg viewBox="0 0 24 24" className={`ml-[10px] ${trayIcon}`} fill="none" stroke="#fff" strokeWidth="1.3">
        <path d="M7.500 7.500H20.500v9H5v-4M20.500 10.500H22v3h-1.500" />
        <path d="M9 9h10v6H7V12z" fill="#fff" stroke="none" />
        <path d="M3 5v3.500M6 5v3.500M1.800 7.500h5.500v2.300H1.800zM4.500 10v4" />
      </svg>
      <svg viewBox="0 0 24 24" className={`ml-[7px] ${trayIcon}`} fill="none" stroke="#e6e6e6" strokeWidth="1.3">
        <path d="M3 20C4 11 11 4.500 20 4.500M7 20c.5-7 6-11.800 13-11.800M11 20c.5-4.500 4-8 9-8M15 20c.2-2.500 2-4.300 5-4.500" />
        <circle cx="18.500" cy="19" r="1.700" fill="#fff" stroke="none" />
      </svg>
      <svg viewBox="0 0 24 24" className={`ml-[5px] ${trayIcon}`} fill="none" stroke="#fff" strokeWidth="1.3">
        <path d="M2 9h3l5-4.500v14L5 14.500H2zM13 9c1.500 1.500 1.500 4 0 5.500M16 6.500c3 3 3 7.500 0 10.500M19 4c4 4.500 4 11 0 15.500" />
      </svg>
      <svg viewBox="0 0 24 24" className={`ml-[8px] ${trayIcon}`} fill="none" stroke="#fff" strokeWidth="1.3">
        <path d="M4.500 7h9v10h-9zM13.500 11l4-3v8l-4-3zM6 3.500c3-1.500 6-1.500 9 0M6 20.500c3 1.500 6 1.500 9 0" />
      </svg>
      <span className="ml-[10px] w-[37px] text-[15px] tracking-[-0.2px]">FRA</span>
      <div className="flex w-[80px] flex-col items-center pb-[1px] text-[15px] leading-[23px]">
        <span className="tracking-[-0.2px]">11:57 AM</span>
        <span className="tracking-[-0.25px]">2/24/2025</span>
      </div>
      <span className="relative ml-[17px] flex h-[24px] w-[20px]">
        <svg viewBox="0 0 20 22" className="h-[22px] w-5">
          <path d="M0 1h20v17H9l-5 4v-4H0z" fill="#fff" />
          <path d="M4 5.500h12M4 9.500h12M4 13.500h8" stroke="#1c1c1c" strokeWidth="1.200" />
        </svg>
        <span className="absolute top-[11px] left-[9px] flex h-[21px] w-[21px] items-center justify-center rounded-full border border-[#8a8a8a] bg-[#2c2c2c] text-[14px] font-semibold tracking-[-0.8px]">
          11
        </span>
      </span>
      <div className="ml-[25px] h-[50px] w-px bg-[#6a6a6a]" />
    </div>
  );
}

function Taskbar() {
  return (
    <div className="flex h-[50px] bg-[linear-gradient(90deg,#2b2018_0%,#2b2119_45%,#1e1c1b_65%,#1c1c1c_100%)]">
      <div className="flex w-[60px] shrink-0 items-center justify-center">
        <svg viewBox="0 0 20 20" className="h-5 w-5" fill="#fff">
          <path d="M0 2.8 8.3 1.6v7.9H0zM9.2 1.5 20 0v9.5H9.2zM0 10.5h8.3v7.9L0 17.2zM9.2 10.5H20V20L9.2 18.5z" />
        </svg>
      </div>
      <div className="flex w-[360px] shrink-0 items-center border border-[#c4c4c4] bg-[#f2f2f2] pl-[13px]">
        <svg viewBox="0 0 22 22" className="h-[22px] w-[22px]" fill="none" stroke="#1a1a1a" strokeWidth="1.6">
          <circle cx="13.5" cy="8" r="6.5" />
          <path d="M9 12.8 1 21" />
        </svg>
        <span className="ml-[14px] font-['Open_Sans'] text-[19px] tracking-[-0.6px] whitespace-nowrap text-[#2b2b2b]">Type here to search</span>
        <div className="mr-[3px] ml-auto">
          <Reef />
        </div>
      </div>
      <div className="flex w-[62px] shrink-0 items-center pl-[19px]">
        <svg viewBox="0 0 22 22" className="h-[20px] w-[22px]" fill="none" stroke="#fff" strokeWidth="1.3">
          <path d="M1.5 1v3.5h12V1M1.5 7h12v8h-12zM1.5 21v-3.5h12V21M19.5 1v4M19.5 12v9" />
          <path d="M18 7h3v3h-3z" fill="#fff" stroke="none" />
        </svg>
      </div>
      {apps.map(({ Icon, bar, active }, i) => (
        <div
          key={i}
          className={active ? 'ml-[3px] mr-[3px] flex w-[56px] shrink-0 flex-col items-center bg-[#4c4b4a]' : 'flex w-[62px] shrink-0 flex-col items-center'}
        >
          <div className="flex h-[47px] items-center justify-center pt-[3px]">
            <Icon />
          </div>
          {bar}
        </div>
      ))}
      <Tray />
    </div>
  );
}

export default function App() {
  return (
    <div className="flex h-[1080px] w-[1920px] flex-col overflow-hidden bg-white">
      <TabStrip />
      <Toolbar />
      <div className="flex h-[879px]">
        <SwaggerPage />
        <Scrollbar />
      </div>
      <Taskbar />
    </div>
  );
}
